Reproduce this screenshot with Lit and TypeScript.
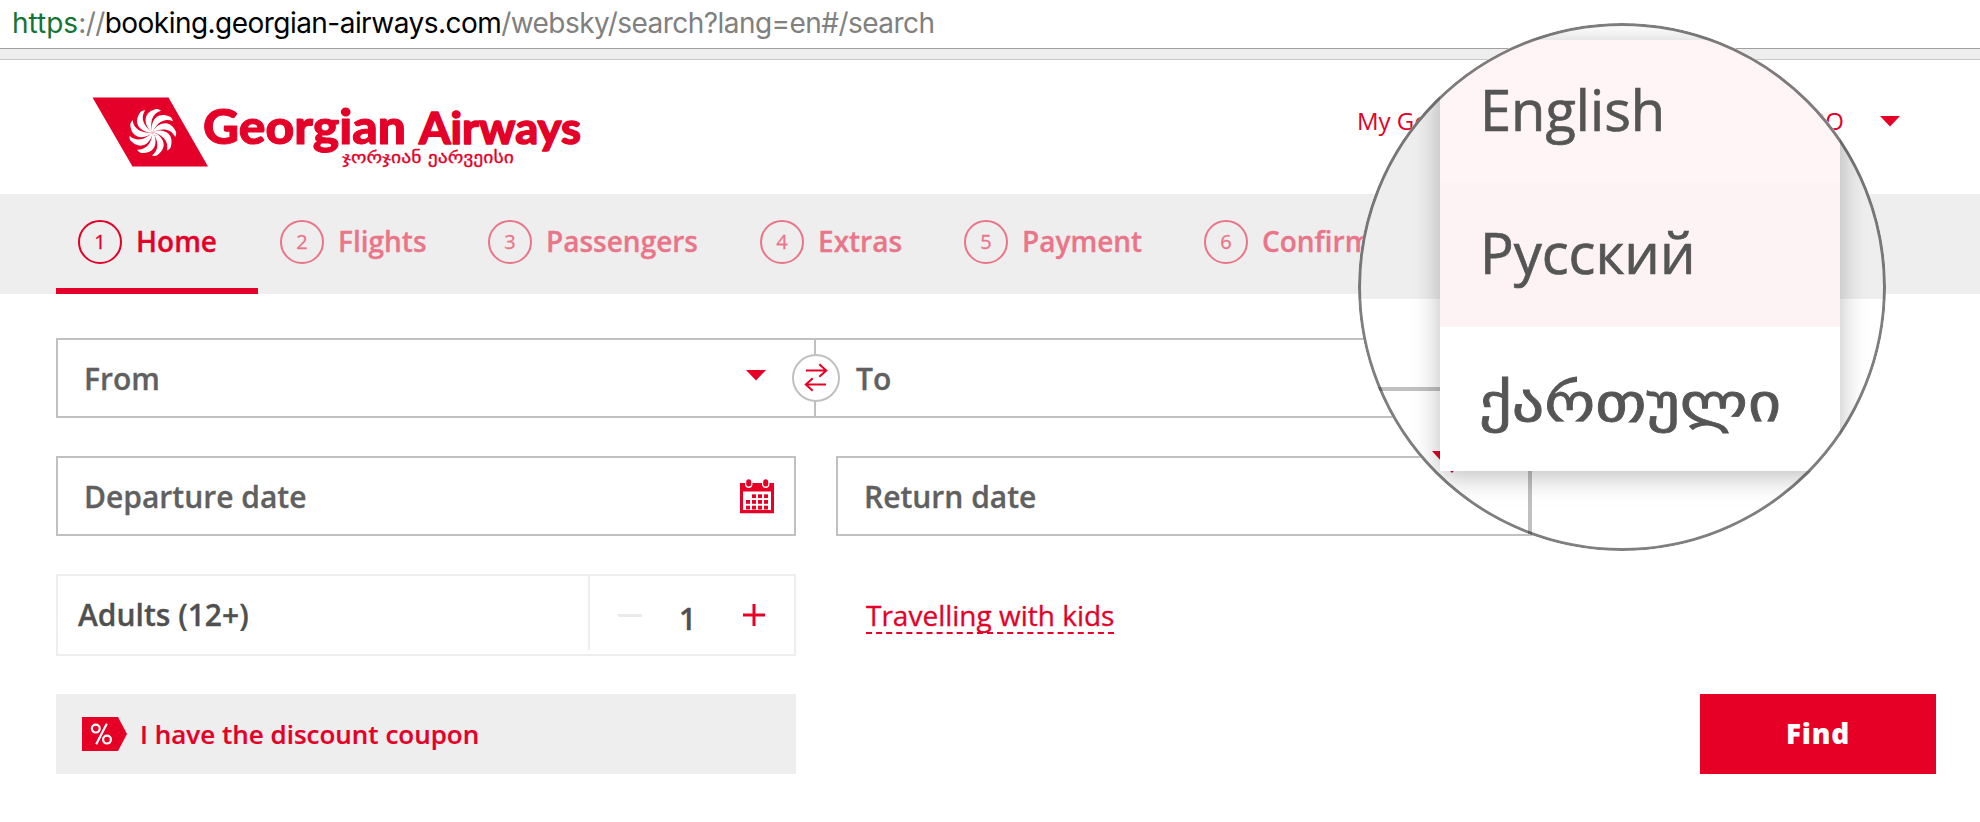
import { LitElement, html, css, svg } from "lit";
import { customElement } from "lit/decorators.js";
import { classMap } from "lit/directives/class-map.js";

const STEPS = [
  { label: "Home", width: 202 },
  { label: "Flights", width: 208 },
  { label: "Passengers", width: 272 },
  { label: "Extras", width: 204 },
  { label: "Payment", width: 240 },
  { label: "Confirmation", width: 290 },
];

const LANGUAGES = [
  { label: "English", tone: "first" },
  { label: "Русский", tone: "second" },
  { label: "ქართული", tone: "georgian" },
];

@customElement("ga-logo")
export class GaLogo extends LitElement {
  static styles = css`
    :host { display: block; width: 500px; height: 80px; }
    svg { display: block; fill: #e40028; }
    .word { font-family: Lato, sans-serif; font-weight: 900; stroke: #e40028; stroke-width: 1; stroke-linejoin: round; }
    .word2 { font-family: Lato, sans-serif; font-weight: 700; stroke: #e40028; stroke-width: 1.6; stroke-linejoin: round; }
    .sub { font-family: "DejaVu Sans", sans-serif; font-size: 16.5px; stroke: #e40028; stroke-width: 0.3; }
    .blade { fill: #fff; }
  `;

  render() {
    const blades = Array.from({ length: 9 }, (_, i) => i * 40);
    return html`
      <svg width="500" height="80" viewBox="90 94 500 80">
        <path d="M92.5 97.5H168.5L208 166.5H132.5Z" />
        <g transform="translate(152.5 132.3)">
          ${blades.map(
            (a) => svg`<path class="blade" transform="rotate(${a})" d="M0 0C-7 -4 -12.5 -19 3.5 -23.2C5 -23.4 7 -22.8 8.5 -21.6C-0.5 -19 -3 -10 0 0Z" />`
          )}
        </g>
        <text class="word" x="203" y="144.3" font-size="47" textLength="203" lengthAdjust="spacingAndGlyphs">Georgian</text>
        <text class="word2" x="419" y="143.5" font-size="43" textLength="162" lengthAdjust="spacingAndGlyphs">Airways</text>
        <text class="sub" x="342" y="163" textLength="172" lengthAdjust="spacingAndGlyphs">ჯორჯიან ეარვეისი</text>
      </svg>
    `;
  }
}

@customElement("ga-lens")
export class GaLens extends LitElement {
  static styles = css`
    :host { display: block; width: 528px; height: 528px; border-radius: 50%; overflow: hidden; position: relative;
      background: linear-gradient(#fff 0 40px, #eee 40px 276px, #fff 276px); }
    :host::after { content: ""; position: absolute; inset: 0; border: 3px solid rgba(0, 0, 0, 0.5); border-radius: 50%; }
    .field-line { position: absolute; left: 0; top: 364px; width: 120px; height: 4px; background: #c0c0c0; }
    .side-line { position: absolute; left: 170px; top: 440px; width: 4px; height: 88px; background: #c0c0c0; }
    .caret { position: absolute; left: 74px; top: 428px; fill: #e40028; }
    .menu { position: absolute; left: 82px; top: 17px; width: 400px; background: #fff; box-shadow: 0 5px 26px rgba(0, 0, 0, 0.27); }
    .item { height: 144px; box-sizing: border-box; padding: 0 0 6px 40px; display: flex; align-items: center;
      font: 400 56px/78px "Open Sans", sans-serif; color: #555; white-space: nowrap; -webkit-text-stroke: 0.7px #555; }
    .first { background: #fff5f7; height: 143px; }
    .second { background: #fdf2f4; }
    .georgian { font-family: "DejaVu Sans", sans-serif; font-size: 52px; padding: 7px 0 0 39px; -webkit-text-stroke: 0.8px #555; }
    .georgian span { transform: scaleX(1.23); transform-origin: left center; }
  `;

  render() {
    return html`
      <div class="field-line"></div>
      <div class="side-line"></div>
      <svg class="caret" width="40" height="22" viewBox="0 0 40 22"><path d="M0 0H40L20 22Z" /></svg>
      <div class="menu">
        ${LANGUAGES.map((l) => html`<div class="item ${l.tone}"><span>${l.label}</span></div>`)}
      </div>
    `;
  }
}

@customElement("app-root")
export class AppRoot extends LitElement {
  static styles = css`
    :host { display: block; position: relative; width: 1980px; height: 822px; overflow: hidden; background: #fff;
      font-family: "Open Sans", sans-serif; color: #e40028; }
    * { box-sizing: border-box; }
    svg { display: block; }
    .url { height: 49px; border-bottom: 1px solid #a0a0a0; padding: 0 0 2px 12px; display: flex; align-items: center;
      font: 400 28px/36px Inter, sans-serif; letter-spacing: -0.54px; color: #808080; white-space: pre; }
    .scheme { color: #137333; letter-spacing: 0; }
    .host { color: #000; }
    .strip { height: 11px; background: #eee; border-bottom: 1px solid #c8c8c8; }
    .header { height: 134px; padding: 34px 80px 0 90px; display: flex; justify-content: space-between; align-items: flex-start; }
    .account { display: flex; align-items: center; width: 543px; height: 54px; font-size: 24px; line-height: 32px; }
    .account .currency { margin-left: auto; margin-right: 36px; }
    .steps { height: 100px; background: #eee; padding-left: 56px; display: flex; }
    .step { display: flex; align-items: center; padding: 0 0 4px 22px; gap: 14px; border-bottom: 0 solid #e40028;
      color: #ea7589; font-size: 28px; font-weight: 600; -webkit-text-stroke: 0.3px currentColor; }
    .step.active { color: #e40028; border-bottom-width: 6px; padding-bottom: 0; padding-top: 2px; }
    .step .name { padding-bottom: 2px; }
    .num { width: 44px; height: 44px; border: 2px solid currentColor; border-radius: 50%; display: flex;
      align-items: center; justify-content: center; font-size: 20px; font-weight: 400; padding-bottom: 1px; }
    .form { padding: 44px 0 0 56px; display: grid; grid-template-columns: 740px 740px; column-gap: 40px; color: #606060;
      font-size: 30px; line-height: 40px; font-weight: 600; -webkit-text-stroke: 0.3px currentColor; }
    .box { height: 80px; border: 2px solid #c0c0c0; display: flex; align-items: center; padding: 0 20px 0 26px; justify-content: space-between; }
    .route { grid-column: span 2; display: flex; position: relative; padding: 0; justify-content: flex-start; margin-bottom: 38px; }
    .from { width: 758px; height: 76px; border-right: 2px solid #c0c0c0; display: flex; align-items: center; justify-content: space-between; padding: 2px 48px 0 26px; }
    .from svg { margin-top: -7px; }
    .to { padding: 0 0 0 40px; }
    .swap { position: absolute; left: 734px; top: 14px; width: 48px; height: 48px; border: 2px solid #c0c0c0; border-radius: 50%; background: #fff; }
    .label { padding-top: 2px; }
    .adults { margin-top: 38px; height: 82px; border: 2px solid #eee; display: flex; color: #505050; }
    .adults .name { flex: 1; padding: 19px 0 0 20px; }
    .counter { width: 206px; height: 74px; border-left: 2px solid #eee; display: flex; align-items: center; padding: 6px 28px 0 28px; justify-content: space-between; }
    .counter svg { margin-top: -2px; }
    .count { padding: 5px 9px 0 0; line-height: 40px; }
    .kids { margin-top: 38px; padding: 19px 0 0 30px; font-size: 28px; line-height: 44px; font-weight: 400; color: #e40028; }
    .kids span { display: inline-block; height: 41px; border-bottom: 2px dashed #e40028; }
    .actions { margin-top: 38px; padding: 0 44px 0 56px; display: flex; justify-content: space-between; }
    .coupon { width: 740px; height: 80px; background: #eee; padding-left: 26px; display: flex; align-items: center;
      gap: 11px; font-size: 26px; font-weight: 600; -webkit-text-stroke: 0.2px currentColor; }
    .find { width: 236px; height: 80px; border: 0; background: #e60026; color: #fff; font: 800 28px "Open Sans", sans-serif; padding: 0 0 2px; letter-spacing: 0.8px; }
    ga-lens { position: absolute; left: 1358px; top: 23px; }
  `;

  private caret() {
    return html`<svg width="20" height="11" viewBox="0 0 20 11"><path fill="#e60026" d="M0 0H20L10 10.5Z" /></svg>`;
  }

  private calendar() {
    const dots = [];
    for (let r = 0; r < 3; r++) {
      for (let c = 0; c < 4; c++) {
        if (r || c) dots.push(svg`<rect x=${6 + c * 6} y=${15.3 + r * 5.7} width="4" height="3.8" />`);
      }
    }
    return html`<svg width="34" height="35" viewBox="0 0 34 35" fill="#e60026">
      <path fill-rule="evenodd" d="M0 4H34V34.3H0ZM3 12.5V31H31V12.5Z" />
      <rect x="5" y="0" width="7.4" height="9" rx="3.7" fill="#fff" />
      <rect x="22" y="0" width="7.4" height="9" rx="3.7" fill="#fff" />
      <rect x="6.2" y="0.2" width="5" height="7.4" rx="2.5" />
      <rect x="23.2" y="0.2" width="5" height="7.4" rx="2.5" />
      ${dots}
    </svg>`;
  }

  render() {
    return html`
      <div class="url"><span class="scheme">https</span><span>://</span><span class="host">booking.georgian-airways.com</span><span>/websky/search?lang=en#/search</span></div>
      <div class="strip"></div>
      <header class="header">
        <ga-logo></ga-logo>
        <div class="account"><span>My Geo</span><span class="currency">RO</span>${this.caret()}</div>
      </header>
      <nav class="steps">
        ${STEPS.map(
          (s, i) => html`<div class=${classMap({ step: true, active: i === 0 })} style="width:${s.width}px">
            <span class="num">${i + 1}</span><span class="name">${s.label}</span>
          </div>`
        )}
      </nav>
      <main class="form">
        <div class="box route">
          <div class="from"><span>From</span>${this.caret()}</div>
          <div class="swap">
            <svg width="44" height="44" viewBox="794 356 44 44" fill="none" stroke="#e60026" stroke-width="2">
              <path d="M806 370.5H826.5M819.3 364.2L826.3 370.5L819.3 376.8M826 384.5H806M812.7 378.2L805.8 384.5L812.7 390.8" />
            </svg>
          </div>
          <div class="to"><div class="label">To</div></div>
        </div>
        <div class="box"><span class="label">Departure date</span>${this.calendar()}</div>
        <div class="box"><span class="label">Return date</span></div>
        <div class="adults">
          <span class="name">Adults (12+)</span>
          <div class="counter">
            <svg width="24" height="24"><path stroke="#eaeaea" stroke-width="3" d="M0 12.5H24" /></svg>
            <span class="count">1</span>
            <svg width="24" height="24"><path stroke="#e60026" stroke-width="3" d="M1 12H23M12 1V23" /></svg>
          </div>
        </div>
        <div class="kids"><span>Travelling with kids</span></div>
      </main>
      <div class="actions">
        <div class="coupon">
          <svg width="47" height="34" viewBox="0 0 47 34">
            <path fill="#e60026" d="M0 0H36L45 17L36 34H0Z" />
            <g fill="none" stroke="#fff" stroke-width="2.2">
              <circle cx="13.8" cy="11.6" r="3.9" /><circle cx="25" cy="22.6" r="3.9" /><path d="M24.8 6.8L14.2 27.3" />
            </g>
          </svg>
          <span>I have the discount coupon</span>
        </div>
        <button class="find">Find</button>
      </div>
      <ga-lens></ga-lens>
    `;
  }
}
